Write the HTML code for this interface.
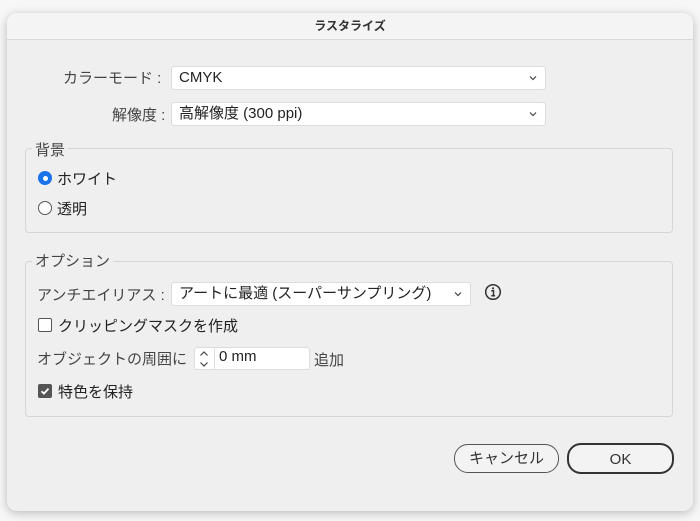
<!DOCTYPE html>
<html><head><meta charset="utf-8"><style>
*{box-sizing:border-box;margin:0;padding:0}
body{width:700px;height:521px;background:#f7f7f7;font-family:"Liberation Sans","Noto Sans CJK JP",sans-serif;color:#222;position:relative;overflow:hidden}
.dlg{position:absolute;left:7px;top:13px;width:686px;height:498px;background:#efefef;border-radius:10px;box-shadow:0 2px 10px rgba(0,0,0,.25);overflow:hidden}
.title{height:27px;background:#f4f4f4;border-bottom:1px solid #d8d8d8;text-align:center;font-size:12px;line-height:26px;font-weight:bold;color:#333}
.a{position:absolute;font-size:15px;white-space:nowrap}
.sel{position:absolute;background:#fff;border:1px solid #dcdcdc;border-radius:3px;font-size:15px;padding-left:7px;line-height:22px;height:24px}
.sel svg{position:absolute;right:8px;top:8px}
.grp{position:absolute;border:1px solid #d6d6d6;border-radius:4px}
.lg{position:absolute;background:#efefef;padding:0 3px;font-size:15px;color:#444}
.btn{position:absolute;border:1.5px solid #555;border-radius:14px;background:#f3f3f3;text-align:center;font-size:15px;color:#333}
</style></head><body>
<div class="dlg">
<div class="title">ラスタライズ</div>
</div>
<div class="a" style="left:63px;top:67px;color:#444">カラーモード :</div>
<div class="sel" style="left:171px;top:66px;width:375px">CMYK<svg width="8" height="6"><path d="M1 1.5l3 3 3-3" fill="none" stroke="#444" stroke-width="1.2"/></svg></div>
<div class="a" style="left:112px;top:104px;color:#444">解像度 :</div>
<div class="sel" style="left:171px;top:102px;width:375px">高解像度 (300 ppi)<svg width="8" height="6"><path d="M1 1.5l3 3 3-3" fill="none" stroke="#444" stroke-width="1.2"/></svg></div>

<div class="grp" style="left:25px;top:148px;width:648px;height:85px"></div>
<div class="lg" style="left:32px;top:139px">背景</div>
<div style="position:absolute;left:38px;top:171px;width:14px;height:14px;border-radius:50%;background:#1a73e8"><div style="position:absolute;left:4.5px;top:4.5px;width:5px;height:5px;border-radius:50%;background:#fff"></div></div>
<div class="a" style="left:57px;top:168px">ホワイト</div>
<div style="position:absolute;left:38px;top:201px;width:14px;height:14px;border-radius:50%;border:1.2px solid #555;background:#fff"></div>
<div class="a" style="left:57px;top:198px">透明</div>

<div class="grp" style="left:25px;top:261px;width:648px;height:156px"></div>
<div class="lg" style="left:32px;top:250px">オプション</div>
<div class="a" style="left:37px;top:284px;color:#444">アンチエイリアス :</div>
<div class="sel" style="left:171px;top:282px;width:300px">アートに最適 (スーパーサンプリング)<svg width="8" height="6"><path d="M1 1.5l3 3 3-3" fill="none" stroke="#444" stroke-width="1.2"/></svg></div>
<svg style="position:absolute;left:484px;top:283px" width="18" height="18" viewBox="0 0 18 18"><circle cx="9" cy="9" r="7.3" fill="none" stroke="#333" stroke-width="1.5"/><circle cx="9" cy="5.3" r="1.1" fill="#333"/><path d="M7.3 7.7h2.2v5M7.3 12.7h3.8" fill="none" stroke="#333" stroke-width="1.5"/></svg>
<div style="position:absolute;left:38px;top:318px;width:14px;height:14px;border:1.2px solid #555;border-radius:2px;background:#fff"></div>
<div class="a" style="left:58px;top:315px">クリッピングマスクを作成</div>
<div class="a" style="left:37px;top:348px;color:#444">オブジェクトの周囲に</div>
<div style="position:absolute;left:194px;top:347px;width:116px;height:23px;background:#fff;border:1px solid #dcdcdc;border-radius:3px"></div>
<div style="position:absolute;left:214px;top:347px;width:1px;height:23px;background:#ddd"></div>
<svg style="position:absolute;left:198px;top:349px" width="12" height="20"><path d="M2.5 6.5l3.5-3.5 3.5 3.5M2.5 13.5l3.5 3.5 3.5-3.5" fill="none" stroke="#444" stroke-width="1.2"/></svg>
<div class="a" style="left:219px;top:348px">0 mm</div>
<div class="a" style="left:314px;top:349px;color:#444">追加</div>
<div style="position:absolute;left:38px;top:384px;width:14px;height:14px;border-radius:2px;background:#555"><svg width="14" height="14"><path d="M3.5 7.2l2.4 2.4 4.6-5" fill="none" stroke="#fff" stroke-width="1.8"/></svg></div>
<div class="a" style="left:58px;top:381px">特色を保持</div>

<div class="btn" style="left:454px;top:444px;width:105px;height:29px;line-height:28px">キャンセル</div>
<div class="btn" style="left:567px;top:443px;width:107px;height:31px;line-height:29px;border:2.5px solid #333">OK</div>
</body></html>
